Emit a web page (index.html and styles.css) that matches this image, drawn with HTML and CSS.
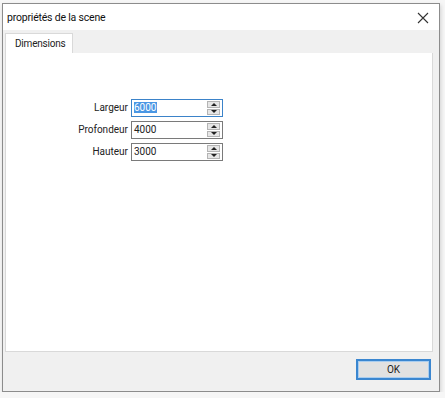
FILE: index.html
```html
<!DOCTYPE html>
<html lang="fr">
<head>
    <meta charset="UTF-8">
    <title>propriétés de la scene</title>
    <link rel="stylesheet" href="styles.css">
</head>
<body>

    <div class="window">
        <div class="titlebar">
            <span class="title">propriétés de la scene</span>
            <span class="close">
                <svg width="12" height="12" viewBox="0 0 12 12">
                    <path d="M1 1 L11 11 M11 1 L1 11" stroke="#333" stroke-width="1.1" fill="none"/>
                </svg>
            </span>
        </div>

        <div class="client">
            <div class="tabs">
                <div class="tab active">Dimensions</div>
            </div>

            <div class="panel">
                <div class="fields">
                    <label>Largeur</label>
                    <div class="spin focused">
                        <span class="value"><span class="selected">6000</span></span>
                        <span class="arrows">
                            <span class="arrow up"></span>
                            <span class="arrow down"></span>
                        </span>
                    </div>

                    <label>Profondeur</label>
                    <div class="spin">
                        <span class="value">4000</span>
                        <span class="arrows">
                            <span class="arrow up"></span>
                            <span class="arrow down"></span>
                        </span>
                    </div>

                    <label>Hauteur</label>
                    <div class="spin">
                        <span class="value">3000</span>
                        <span class="arrows">
                            <span class="arrow up"></span>
                            <span class="arrow down"></span>
                        </span>
                    </div>
                </div>
            </div>

            <div class="footer">
                <button type="button" class="ok">OK</button>
            </div>
        </div>
    </div>

</body>
</html>
```

FILE: styles.css
```css
* {
    margin: 0;
    padding: 0;
    box-sizing: border-box;
}
body {
    font-family: Roboto, "Noto Sans", sans-serif;
    font-size: 10px;
    color: #222;
    background-color: #f6f6f6;
    padding: 3px 0 0 2px;
}
.window {
    width: 438px;
    height: 389px;
    border: 1px solid #8c8c8c;
    background-color: #f0f0f0;
    box-shadow: 1px 2px 4px rgba(0, 0, 0, 0.15);
    display: flex;
    flex-direction: column;
}
.titlebar {
    height: 26px;
    background-color: #fff;
    display: flex;
    align-items: center;
    justify-content: space-between;
    padding-left: 4px;
    padding-right: 10px;
}
.title {
    font-size: 10.5px;
    color: #111;
    letter-spacing: -0.2px;
}
.close {
    display: flex;
    padding-top: 2px;
}
.client {
    flex: 1;
    display: flex;
    flex-direction: column;
    padding: 3px 6px 0 2px;
}
.tabs {
    display: flex;
    height: 20px;
}
.tab {
    padding: 0 6px 0 9px;
    line-height: 19px;
    letter-spacing: -0.2px;
}
.tab.active {
    width: 68px;
    background-color: #fff;
    border: 1px solid #d9d9d9;
    border-bottom: none;
}
.panel {
    height: 299px;
    background-color: #fff;
    border: 1px solid #d9d9d9;
    border-top: none;
}
.fields {
    display: grid;
    grid-template-columns: 122px 92px;
    grid-auto-rows: 18px;
    column-gap: 3px;
    row-gap: 4px;
    margin-top: 46px;
}
.fields label {
    text-align: right;
    line-height: 18px;
}
.spin {
    display: flex;
    border: 1px solid #7a7a7a;
    background-color: #fff;
}
.spin.focused {
    border-color: #3b83c9;
}
.value {
    flex: 1;
    line-height: 16px;
    padding-left: 2px;
}
.selected {
    background-color: #4a97e4;
    color: #fff;
    padding-right: 1px;
}
.arrows {
    width: 13px;
    margin: 1px 2px 1px 0;
    display: flex;
    flex-direction: column;
    gap: 1px;
}
.arrow {
    flex: 1;
    background-color: #e6e6e6;
    border: 1px solid #b4b4b4;
    display: flex;
    align-items: center;
    justify-content: center;
}
.arrow::after {
    content: "";
    border-left: 3px solid transparent;
    border-right: 3px solid transparent;
}
.arrow.up::after {
    border-bottom: 3px solid #222;
}
.arrow.down::after {
    border-top: 3px solid #222;
}
.footer {
    flex: 1;
    display: flex;
    justify-content: flex-end;
    align-items: flex-start;
    padding: 7px 2px 0 0;
}
.ok {
    width: 75px;
    height: 21px;
    font-family: inherit;
    font-size: 10px;
    background-color: #e1e1e1;
    border: 2px solid #3a86d0;
    box-shadow: inset 0 0 0 1px #a9cdef;
    color: #222;
}
```
